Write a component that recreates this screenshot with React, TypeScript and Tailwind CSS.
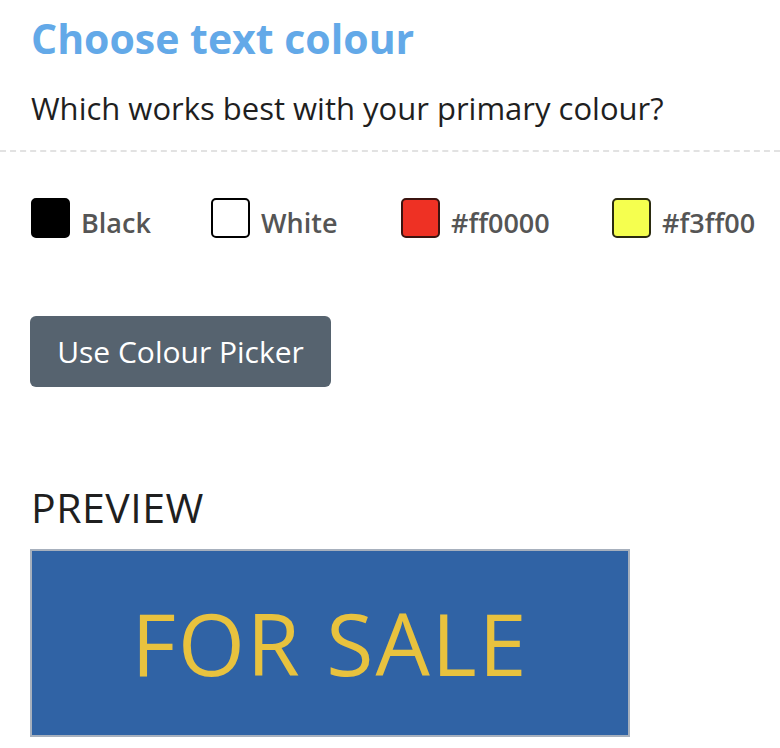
const swatches = [
  { label: 'Black', fill: 'bg-black', border: 'border-black', gap: 'w-[180px]' },
  { label: 'White', fill: 'bg-white', border: 'border-black', gap: 'w-[190px]' },
  { label: '#ff0000', fill: 'bg-[#ee3124]', border: 'border-[#3b1410]', gap: 'w-[211px]' },
  { label: '#f3ff00', fill: 'bg-[#f5ff4f]', border: 'border-[#2b2b10]', gap: 'w-auto' },
];

export default function App() {
  return (
    <div className="min-h-[748px] w-[780px] overflow-hidden bg-white font-['Open_Sans',sans-serif]">
      <div className="px-[31px] pt-[13px]">
        <h1 className="text-[41px] font-bold leading-[50px] text-[#63a9e8]">Choose text colour</h1>
        <p className="mt-[25px] text-[31px] leading-[40px] text-[#1f1f1f]">
          Which works best with your primary colour?
        </p>
      </div>

      {/* separator */}
      <div className="mt-[22px] border-t-2 border-dashed border-[#e2e2e2]" />

      <div className="px-[30px]">
        <div className="mt-[46px] flex items-center pl-px">
          {swatches.map((s) => (
            <div key={s.label} className={`flex shrink-0 items-center ${s.gap}`}>
              <span className={`h-[40px] w-[39px] rounded-[5px] border-2 ${s.fill} ${s.border}`} />
              <span className="ml-[11px] mt-[8px] text-[27px] font-semibold leading-none text-[#555555]">
                {s.label}
              </span>
            </div>
          ))}
        </div>

        <button
          type="button"
          className="mt-[78px] flex h-[71px] w-[301px] items-center justify-center rounded-[6px] bg-[#56636f] text-[30px] text-white"
        >
          Use Colour Picker
        </button>

        <h2 className="mt-[100px] pl-px text-[41px] leading-[40px] tracking-[0.5px] text-[#1f1f1f]">PREVIEW</h2>

        <div className="mt-[22px] flex h-[188px] w-[600px] items-center justify-center border-2 border-[#a7b0bd] bg-[#3063a5]">
          <span className="text-[86px] leading-none tracking-[2px] text-[#e8c23e]">FOR SALE</span>
        </div>
      </div>
    </div>
  );
}
